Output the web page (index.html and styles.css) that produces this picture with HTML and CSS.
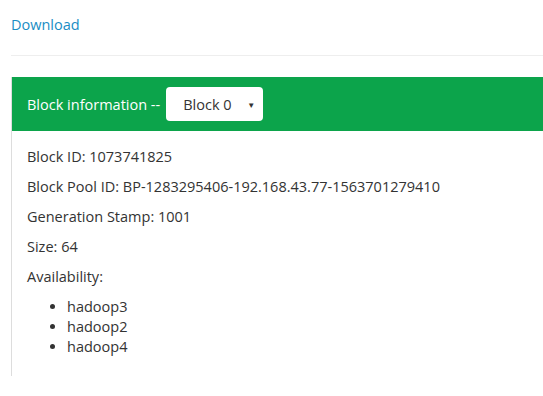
FILE: index.html
```html
<!DOCTYPE html>
<html lang="en">
<head>
  <meta charset="UTF-8">
  <title>Browse Directory</title>
  <link rel="stylesheet" href="styles.css">
</head>
<body>
  <div class="page">
    <p class="download"><a href="#">Download</a></p>
    <hr>

    <div class="panel">
      <div class="panel-heading">
        <span>Block information --</span>
        <div class="select-box">
          <span>Block 0</span>
          <span class="caret">&#9660;</span>
        </div>
      </div>
      <div class="panel-body">
        <p>Block ID: 1073741825</p>
        <p>Block Pool ID: BP-1283295406-192.168.43.77-1563701279410</p>
        <p>Generation Stamp: 1001</p>
        <p>Size: 64</p>
        <p>Availability:</p>
        <ul>
          <li>hadoop3</li>
          <li>hadoop2</li>
          <li>hadoop4</li>
        </ul>
      </div>
    </div>
  </div>
</body>
</html>
```

FILE: styles.css
```css
* {
  margin: 0;
  padding: 0;
  box-sizing: border-box;
}

body {
  font-family: 'Open Sans', 'Noto Sans', sans-serif;
  font-size: 14.5px;
  color: #333;
  background: #fff;
  overflow: hidden;
}

.page {
  padding-left: 11px;
}

/* Download link */
.download {
  padding-top: 15px;
  line-height: 20px;
}

.download a {
  color: #1a8dc4;
  text-decoration: none;
}

hr {
  border: none;
  border-top: 1px solid #eee;
  margin: 20px 0 21px;
}

/* Panel */
.panel {
  border-left: 1px solid #ddd;
}

.panel-heading {
  background: #0ca44b;
  color: #fff;
  height: 54px;
  padding: 0 15px;
  display: flex;
  align-items: center;
  gap: 6px;
}

.select-box {
  width: 97px;
  height: 34px;
  background: #fff;
  color: #333;
  border-radius: 4px;
  display: flex;
  align-items: center;
  justify-content: space-between;
  padding: 0 8px 0 17px;
}

.caret {
  font-size: 8px;
}

.panel-body {
  padding: 16px 15px 19px;
}

.panel-body p {
  line-height: 20px;
  margin-bottom: 10px;
}

.panel-body ul {
  margin-top: 10px;
  padding-left: 40px;
}

.panel-body li {
  line-height: 20px;
}
```
